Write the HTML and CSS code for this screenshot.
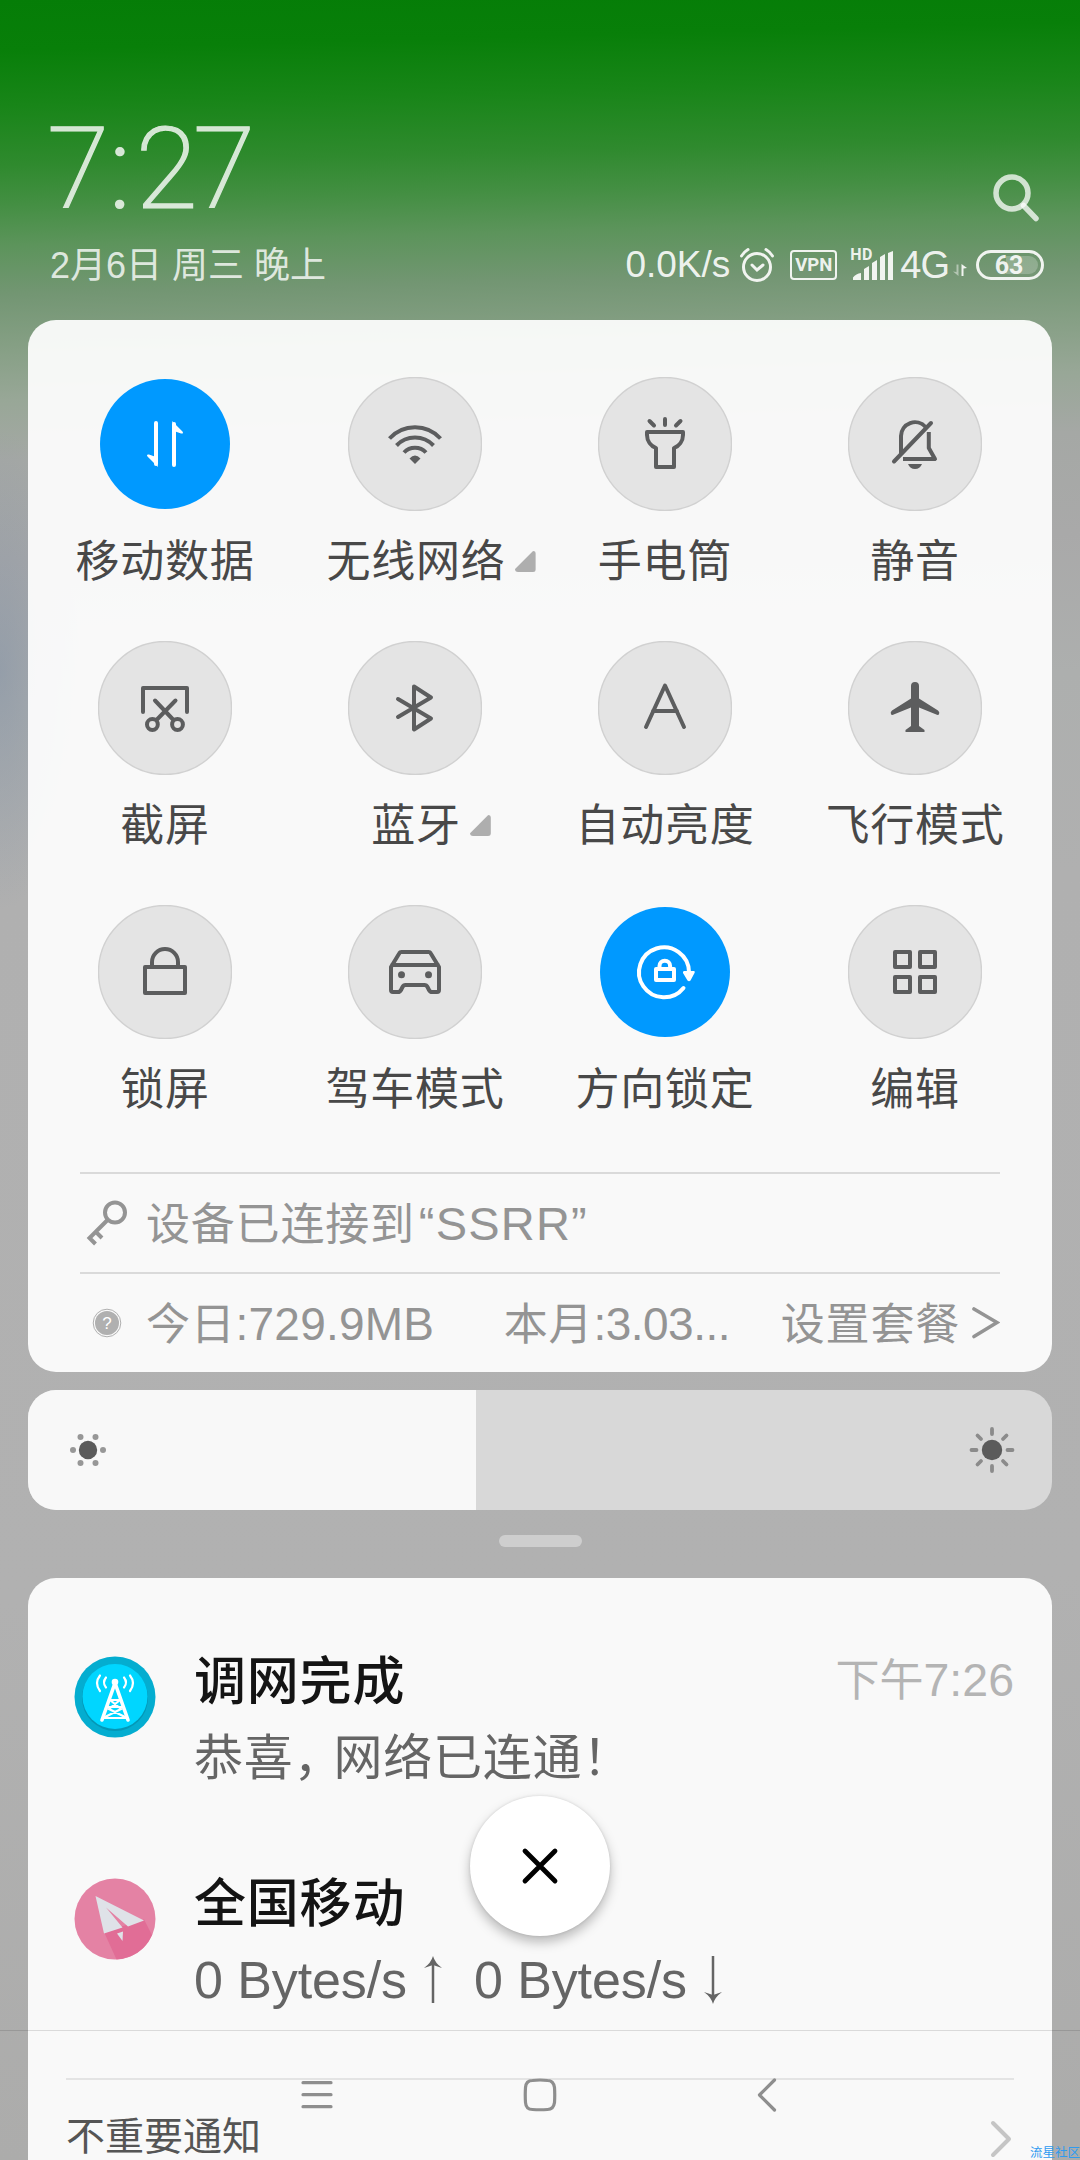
FILE: index.html
```html
<!DOCTYPE html>
<html lang="zh-CN">
<head>
<meta charset="utf-8">
<title>通知栏</title>
<link rel="stylesheet" href="styles.css">
</head>
<body>
<div class="screen">
  <header class="header">
    <div class="header-top">
      <div class="clock"><span>7</span><span class="colon">:</span><span>2</span><span>7</span></div>
      <svg class="search" width="52" height="52" viewBox="0 0 52 52"><circle cx="22" cy="21" r="16"/><path d="M33.500 33.500L46 46.500"/></svg>
    </div>
    <div class="header-bottom">
      <div class="date">2月6日 周三 晚上</div>
      <div class="status">
        <span class="speed">0.0K/s</span>
        <svg class="alarm" width="36" height="36" viewBox="0 0 36 36"><circle cx="18" cy="20" r="13.5"/><path d="M13 18l5 5 6-5"/><path d="M2.5 9q3-4.500 6.500-6.500M33.500 9q-3-4.500-6.500-6.500"/></svg>
        <span class="vpn">VPN</span>
        <span class="signal">
          <b>HD</b>
          <svg width="42" height="32" viewBox="0 0 42 32"><path d="M1 31v-2.500q3-4 8-4.500v7zM12 31V20l5-3v14zM20 31V14l5-3v20zM28 31V8l5-3v26zM36 31V4l5-2v29z"/></svg>
        </span>
        <span class="net">4G</span>
        <svg class="updown" width="14" height="14" viewBox="0 0 14 14"><path class="dim" d="M3.500 1.500h2V13L0 8.500l3.500.5z"/><path d="M10.500 13h-2V1L14 5l-3.500.5z"/></svg>
        <span class="battery"><b>63</b></span>
      </div>
    </div>
  </header>

  <section class="panel controls">
    <div class="tiles">
      <div class="tile on">
        <svg viewBox="0 0 134 134"><circle class="disc" cx="67" cy="67" r="65"/><path d="M58 46V87M76 88V47"/><path class="fill" d="M60 90L49.500 79.500Q48 77 51 77.500L58 80zM74 44L84.500 54.500Q86 57 83 56.500L76 54z"/></svg>
        <div class="name">移动数据</div>
      </div>
      <div class="tile">
        <svg viewBox="0 0 134 134"><circle class="disc" cx="67" cy="67" r="66.500"/><path class="flat" d="M41.500 61.500a34.500 34.500 0 0 1 51 0M48.500 68.500a25.500 25.500 0 0 1 37 0M56 75.500a15 15 0 0 1 22 0"/><path class="fill" d="M61.500 81.500q5.500-6 11 0L67 87z"/></svg>
        <div class="name more">无线网络<i></i></div>
      </div>
      <div class="tile">
        <svg viewBox="0 0 134 134"><circle class="disc" cx="67" cy="67" r="66.500"/><path d="M49 55H85V58C85 64 81 69 76 71V90H58V71C53 69 49 64 49 58ZM67 42v6M51.500 44l4.500 4.500M82.500 44L78 48.500"/></svg>
        <div class="name">手电筒</div>
      </div>
      <div class="tile">
        <svg viewBox="0 0 134 134"><circle class="disc" cx="67" cy="67" r="66.500"/><path d="M46 84.500L83 46M53 77V59a14 14 0 0 1 24.500-9"/><path class="flat" d="M80.800 55V71L87 82H55"/><path class="fill" d="M60 87H74q-2 5-7 5t-7-5z"/></svg>
        <div class="name">静音</div>
      </div>
      <div class="tile">
        <svg viewBox="0 0 134 134"><circle class="disc" cx="67" cy="67" r="66.500"/><path d="M45 71V47H89V71M57 59.500L75.500 79M77.500 59.500L58.500 79"/><circle cx="54.400" cy="83.500" r="5.400"/><circle cx="79.500" cy="83.500" r="5.400"/></svg>
        <div class="name">截屏</div>
      </div>
      <div class="tile">
        <svg viewBox="0 0 134 134"><circle class="disc" cx="67" cy="67" r="66.500"/><path d="M50 58L83 77.500L66 88.500V45.500L83 56.500L50 76"/></svg>
        <div class="name more">蓝牙<i></i></div>
      </div>
      <div class="tile">
        <svg viewBox="0 0 134 134"><circle class="disc" cx="67" cy="67" r="66.500"/><path d="M48 86L67 44.500L86 86M55 70H79"/></svg>
        <div class="name">自动亮度</div>
      </div>
      <div class="tile">
        <svg viewBox="0 0 134 134"><circle class="disc" cx="67" cy="67" r="66.500"/><path class="fill" d="M63 45a4 4 0 0 1 8 0V57.500L90 69.500q2 1.500 1 4l-1.500.5L71 66.500V85l5.500 4v2h-19v-2l5.500-4V66.500L44.500 74 43 73.500q-1-2.500 1-4L63 57.500z"/></svg>
        <div class="name">飞行模式</div>
      </div>
      <div class="tile">
        <svg viewBox="0 0 134 134"><circle class="disc" cx="67" cy="67" r="66.500"/><rect x="47" y="62" width="40" height="26"/><path d="M54 62V57a13 13 0 0 1 26 0v5"/></svg>
        <div class="name">锁屏</div>
      </div>
      <div class="tile">
        <svg viewBox="0 0 134 134"><circle class="disc" cx="67" cy="67" r="66.500"/><path d="M43 62L51.500 48Q52 47 53.500 47H80.500Q82 47 82.500 48L91 62V85q0 2-2 2h-5q-2 0-3-2l-1.500-3q-1-2-3-2H57.500q-2 0-3 2L53 85q-1 2-3 2h-5q-2 0-2-2zM44 60H90"/><circle class="fill" cx="53.500" cy="69.700" r="3.500"/><circle class="fill" cx="80.500" cy="69.700" r="3.500"/></svg>
        <div class="name">驾车模式</div>
      </div>
      <div class="tile on">
        <svg viewBox="0 0 134 134"><circle class="disc" cx="67" cy="67" r="65"/><path d="M91 67A25 25 0 1 0 85.500 83"/><path class="fill" d="M86 66H96q1.500.500.500 2L92.500 75.500q-1.500 1.500-3 0L85 68q-.5-1.500 1-2z"/><rect x="58" y="64" width="18" height="11"/><path d="M61.500 63v-2a5.300 5.300 0 0 1 10.600 0v2"/></svg>
        <div class="name">方向锁定</div>
      </div>
      <div class="tile">
        <svg viewBox="0 0 134 134"><circle class="disc" cx="67" cy="67" r="66.500"/><rect x="47" y="47" width="15" height="15"/><rect x="72" y="47" width="15" height="15"/><rect x="47" y="72" width="15" height="15"/><rect x="72" y="72" width="15" height="15"/></svg>
        <div class="name">编辑</div>
      </div>
    </div>

    <div class="info">
      <svg class="key" width="50" height="50" viewBox="0 0 50 50"><circle cx="35" cy="14.500" r="10"/><path d="M27.500 22L9.500 40l6 6M16 34l6 6"/></svg>
      <span>设备已连接到<em class="quoted">“SSRR”</em></span>
    </div>
    <div class="info usage">
      <svg class="help" width="30" height="30" viewBox="0 0 30 30"><circle class="ring" cx="15" cy="15" r="13.800"/><circle cx="15" cy="15" r="12"/><text x="15" y="21">?</text></svg>
      <span class="today">今日<em>:729.9MB</em></span>
      <span class="month">本月<em>:3.03...</em></span>
      <span>设置套餐</span>
      <svg class="go" width="28" height="32" viewBox="0 0 28 32"><path d="M2 2L25 15.500L2 29.500"/></svg>
    </div>
  </section>

  <section class="brightness">
    <div class="level">
      <svg width="40" height="40" viewBox="0 0 40 40"><circle cx="20" cy="20" r="9.200"/><g class="rays"><circle cx="5" cy="20" r="3"/><circle cx="35" cy="20" r="3"/><circle cx="12.500" cy="7" r="3"/><circle cx="27.500" cy="7" r="3"/><circle cx="12.500" cy="33" r="3"/><circle cx="27.500" cy="33" r="3"/></g></svg>
    </div>
    <svg width="48" height="48" viewBox="0 0 48 48"><circle cx="24" cy="24" r="10.200"/><path class="rays" d="M24 3v5M24 40v5M3.500 24h5M39.500 24h5M9.500 9.500l3.500 3.500M38.500 9.500L35 13M9.500 38.500L13 35M38.500 38.500L35 35"/></svg>
  </section>
  <div class="handle"></div>

  <section class="panel notices">
    <article class="notice">
      <svg class="app" width="82" height="82" viewBox="0 0 82 82">
        <circle cx="41" cy="41" r="40.500" fill="#04add0"/><circle cx="41" cy="42" r="33" fill="#0497b6"/><circle cx="41" cy="40.500" r="32.500" fill="#00d6ff"/>
        <g fill="none" stroke="#fff" stroke-width="2.200" stroke-linecap="round"><path stroke-width="3.600" d="M41 27L28 64M41 27L54 64"/><path d="M37 44H45M34 51H48M30 62H52M36 44L47 53 31 61M46 44L35 53 51 61"/><path d="M32 21.500q-4 5 0 10M26 19.500q-6 7.500 0 15.500M50 21.500q4 5 0 10M56 19.500q6 7.500 0 15.500"/></g><circle cx="41" cy="26" r="3.300" fill="#fff"/>
      </svg>
      <div class="body">
        <div class="line"><h2>调网完成</h2><time>下午<em>7:26</em></time></div>
        <p>恭喜<span class="comma">，</span>网络已连通！</p>
      </div>
    </article>
    <article class="notice">
      <svg class="app" width="82" height="82" viewBox="0 0 82 82">
        <circle cx="41" cy="41" r="40.500" fill="#e482a4"/><path d="M30 54L70 41.500L78 57A40.500 40.500 0 0 1 42.500 81.500z" fill="#e16d96"/>
        <g fill="#dfe2e8"><path d="M21.500 18L70 42.500 54 48.500 32 29.500 48.500 49.500 30 55.500z"/><path d="M43 55.500l6-2-.5 9.500z"/></g>
      </svg>
      <div class="body">
        <div class="line"><h2>全国移动</h2></div>
        <p class="rate">0 Bytes/s<svg width="20" height="48" viewBox="0 0 20 48"><path class="stem" d="M10 6V47"/><path d="M10 0q2 7 9 12l-9-3-9 3q7-5 9-12z"/></svg><span>0 Bytes/s</span><svg width="20" height="48" viewBox="0 0 20 48"><path class="stem" d="M10 0V42"/><path d="M10 48q2-7 9-12l-9 3-9-3q7 5 9 12z"/></svg></p>
      </div>
    </article>
    <div class="minor">
      <span>不重要通知</span>
      <svg width="24" height="38" viewBox="0 0 24 38"><path d="M3 3L19 19L3 35"/></svg>
    </div>
  </section>

  <button class="close"><svg width="40" height="40" viewBox="0 0 40 40"><path d="M5 5L35 35M35 5L5 35"/></svg></button>
  <nav class="navbar">
    <svg width="34" height="34" viewBox="0 0 34 34"><path d="M3 4.700H31M3 16.700H31M3 28.700H31"/></svg>
    <svg width="34" height="34" viewBox="0 0 34 34"><path d="M9.500 2.500Q17 1.500 24.500 2.500Q30.500 2.500 31.500 9.500Q32 17 31.500 24.500Q30.500 31.500 24.500 31.500Q17 32 9.500 31.500Q3 31.500 2.500 24.500Q2 17 2.500 9.500Q3 2.500 9.500 2.500Z"/></svg>
    <svg width="34" height="34" viewBox="0 0 34 34"><path d="M28.500 2L13.500 17L28.500 32"/></svg>
  </nav>
  <div class="mark">流星社区</div>
</div>
</body>
</html>
```
FILE: styles.css
```css
* { box-sizing: border-box; }

body {
  margin: 0;
  font-family: "Liberation Sans", "Noto Sans CJK SC", sans-serif;
  color: #484848;
}

h2, p { margin: 0; }
em { font-style: normal; }
svg { display: block; flex: none; }

.screen {
  position: relative;
  width: 1080px;
  height: 2160px;
  overflow: hidden;
  display: flex;
  flex-direction: column;
  padding: 0 28px;
  background:
    radial-gradient(ellipse 80px 240px at 0 670px, rgba(125, 142, 165, .5), rgba(125, 142, 165, 0)),
    linear-gradient(178.500deg, #057d07 0, #087f09 50px, #188518 105px, #2f8a2e 165px, #448f43 205px, #5c945b 245px, #739673 295px, #859f84 345px, #98a797 400px, #a5a8a5 460px, #a9a9a9 560px, #adafae 700px, #b0b0b0 900px, #b1b1b1 1600px, #acacab 2160px);
}

.header { height: 320px; flex: none; }

.header-top {
  height: 228px;
  display: flex;
  justify-content: space-between;
  padding: 102px 10px 0 19px;
}

.clock {
  display: flex;
  font: 200 113px/136px Roboto, sans-serif;
  color: rgba(255, 255, 255, .8);
  -webkit-text-stroke: 1.200px #d9e8d8;
}
.clock span { width: 57.500px; }
.clock .colon { width: 31px; text-align: center; -webkit-text-stroke-width: 2px; }

.search { margin-top: 70px; fill: none; stroke: rgba(255, 255, 255, .75); stroke-width: 5.500; stroke-linecap: round; }

.header-bottom {
  display: flex;
  justify-content: space-between;
  align-items: center;
  height: 74px;
  padding: 0 8px 0 22px;
  color: rgba(255, 255, 255, .9);
}

.date { padding-bottom: 6px; font-size: 36px; color: rgba(255, 255, 255, .8); white-space: nowrap; }

.status { display: flex; align-items: center; }
.speed { font-size: 37px; }
.alarm { margin-left: 9px; fill: none; stroke: #f1f4f0; stroke-width: 3; stroke-linecap: round; }
.vpn {
  width: 47px;
  height: 30px;
  margin-left: 15px;
  border: 2.500px solid #f1f4f0;
  border-radius: 4px;
  font: 700 18.500px/26px Roboto, sans-serif;
  text-align: center;
}
.signal { position: relative; margin-left: 14px; padding-left: 1px; fill: #f1f4f0; }
.signal b { position: absolute; left: -1px; top: 0; font: 700 16px/12px Roboto, sans-serif; letter-spacing: .5px; }
.net { margin-left: 6px; font-size: 38px; letter-spacing: -1px; }
.updown { margin: 10px 0 0 4px; fill: #f1f4f0; }
.updown .dim { opacity: .5; }
.battery {
  width: 68px;
  height: 30px;
  margin-left: 9px;
  border: 3px solid #f1f4f0;
  border-radius: 15px;
  padding: 3px;
  text-align: center;
}
.battery b {
  display: block;
  height: 18px;
  padding-right: 2px;
  border-radius: 9px;
  background: linear-gradient(90deg, transparent 24px, rgba(255, 255, 255, .22) 24px);
  font: 700 25px/19px Roboto, sans-serif;
}

.panel { background: rgba(255, 255, 255, .92); flex: none; }

.controls { height: 1052px; border-radius: 28px; padding: 57px 52px 0; }

.tiles {
  display: grid;
  grid-template-columns: repeat(4, 250px);
  grid-auto-rows: 264px;
  margin: 0 -40px;
  height: 795px;
}
.tile { display: flex; flex-direction: column; align-items: center; }
.tile svg {
  width: 134px;
  height: 134px;
  fill: none;
  stroke: #5c5d5e;
  stroke-width: 4;
  stroke-linecap: round;
  stroke-linejoin: round;
}
.tile .disc { fill: #e4e4e4; stroke: #d1d1d1; stroke-width: 1.400; }
.tile .fill { fill: #5c5d5e; stroke: none; }
.tile .flat { stroke-linecap: butt; }
.tile.on svg { stroke: #fff; }
.tile.on .disc { fill: #0099ff; stroke: none; }
.tile.on .fill { fill: #fff; }
.name { position: relative; margin-top: 19px; font-size: 44px; line-height: 64px; letter-spacing: .8px; white-space: nowrap; }
.name.more { padding-left: 2px; }
.more i {
  position: absolute;
  left: 100%;
  bottom: 22px;
  margin-left: 9px;
  width: 21px;
  height: 21px;
  border-radius: 3px;
  background: #aeaeae;
  clip-path: polygon(100% 0, 100% 100%, 0 100%, 0 88%, 88% 0);
}

.info {
  height: 100px;
  border-top: 2px solid #dadada;
  display: flex;
  align-items: center;
  font-size: 44px;
  letter-spacing: .8px;
  color: #949494;
  white-space: nowrap;
}
.info span { padding-bottom: 4px; }
.info em { font-size: 46px; letter-spacing: .2px; }
.info .quoted { margin-left: 4px; font-size: 47px; letter-spacing: 1.200px; }
.key { margin-right: 16px; fill: none; stroke: #949494; stroke-width: 4; }
.help { margin: 0 24px 0 12px; fill: #b0b0b0; }
.help .ring { fill: none; stroke: #b0b0b0; stroke-width: 1; }
.help text { font-size: 17px; letter-spacing: 0; text-anchor: middle; fill: #fff; }
.today { width: 359px; }
.month { width: 278px; }
.month em { letter-spacing: -.5px; }
.go { margin-left: 12px; fill: none; stroke: #949494; stroke-width: 3.600; stroke-linecap: round; }

.brightness {
  display: flex;
  align-items: center;
  justify-content: space-between;
  flex: none;
  height: 120px;
  margin-top: 18px;
  padding-right: 36px;
  border-radius: 28px;
  overflow: hidden;
  background: #d8d8d8;
  fill: #5b5b5b;
}
.level { display: flex; align-items: center; width: 448px; height: 120px; padding-left: 40px; background: #f8f8f8; }
.rays { fill: #979797; }
path.rays { stroke: #8b8b8b; stroke-width: 3.800; stroke-linecap: round; }

.handle { width: 83px; height: 12px; margin: 25px auto 31px; flex: none; border-radius: 6px; background: #cecece; }

.notices { height: 620px; border-radius: 28px 28px 0 0; padding-top: 68px; }
.notice { display: flex; height: 222px; padding: 0 38px 0 46px; }
.app { margin-top: 10px; }
.body { flex: 1; padding-left: 38px; }
.line { display: flex; justify-content: space-between; height: 70px; align-items: center; }
h2 { padding-top: 2px; font-size: 52px; font-weight: 500; line-height: 70px; letter-spacing: .8px; color: #141414; }
time { padding-bottom: 8px; font-size: 44px; color: #b4b4b4; }
time em { font-size: 46.500px; }
.notice p { height: 84px; font-size: 49px; line-height: 84px; letter-spacing: .8px; color: #656565; white-space: nowrap; }
.comma { margin-right: -10px; }
.notice .rate { display: flex; align-items: center; font-size: 52px; letter-spacing: -.1px; }
.rate svg { margin-left: 16px; fill: #656565; }
.rate .stem { stroke: #656565; stroke-width: 2.500; }
.rate span { margin-left: 31px; }

.minor {
  display: flex;
  align-items: center;
  justify-content: space-between;
  margin: -12px 38px 0;
  height: 120px;
  border-top: 2px solid #e4e4e4;
  font-size: 39px;
  line-height: 44px;
  color: #555;
}
.minor span { padding-bottom: 5px; }
.minor svg { fill: none; stroke: #c5c5c5; stroke-width: 4; stroke-linecap: round; stroke-linejoin: round; }

.close {
  position: absolute;
  left: 470px;
  top: 1796px;
  width: 140px;
  height: 140px;
  padding: 0;
  border: 0;
  border-radius: 50%;
  display: grid;
  place-items: center;
  background: #fff;
  box-shadow: 0 6px 12px rgba(0, 0, 0, .26), 0 0 3px rgba(0, 0, 0, .12);
}
.close svg { stroke: #000; stroke-width: 4.800; stroke-linecap: round; }

.navbar {
  position: absolute;
  left: 0;
  right: 0;
  bottom: 0;
  height: 130px;
  border-top: 1px solid rgba(0, 0, 0, .12);
  display: flex;
  align-items: center;
  justify-content: space-between;
  padding: 0 300px 2px;
  fill: none;
  stroke: #8e8e8e;
  stroke-width: 3.200;
  stroke-linecap: round;
  stroke-linejoin: round;
}

.mark {
  position: absolute;
  right: 0;
  bottom: 0;
  font-size: 12.500px;
  line-height: 13px;
  color: #2f9bf0;
  white-space: nowrap;
}
```
